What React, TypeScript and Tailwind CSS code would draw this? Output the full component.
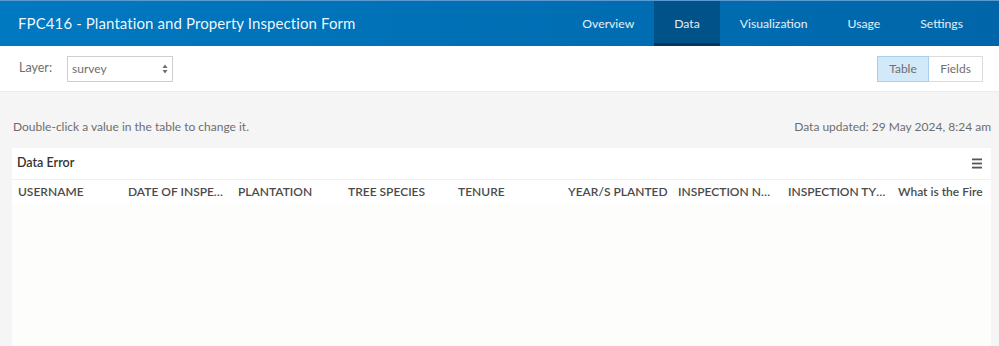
import React from "react";

const cols = [
  { t: "USERNAME", c: "w-[110px] shrink-0 pr-[8px] whitespace-nowrap overflow-hidden text-ellipsis" },
  { t: "DATE OF INSPECTION", c: "w-[110px] shrink-0 pr-[8px] whitespace-nowrap overflow-hidden text-ellipsis" },
  { t: "PLANTATION", c: "w-[110px] shrink-0 pr-[8px] whitespace-nowrap overflow-hidden text-ellipsis" },
  { t: "TREE SPECIES", c: "w-[110px] shrink-0 pr-[8px] whitespace-nowrap overflow-hidden text-ellipsis" },
  { t: "TENURE", c: "w-[110px] shrink-0 pr-[8px] whitespace-nowrap overflow-hidden text-ellipsis" },
  { t: "YEAR/S PLANTED", c: "w-[110px] shrink-0 pr-[4px] whitespace-nowrap overflow-hidden text-ellipsis" },
  { t: "INSPECTION NUMBER", c: "w-[110px] shrink-0 pr-[11px] whitespace-nowrap overflow-hidden text-ellipsis" },
  { t: "INSPECTION TYPE", c: "w-[110px] shrink-0 pr-[8px] whitespace-nowrap overflow-hidden text-ellipsis" },
  { t: "What is the Fire", c: "w-[110px] shrink-0 pr-[8px] whitespace-nowrap overflow-hidden" },
];

export default function App() {
  const font = { fontFamily: "Lato, 'Open Sans', sans-serif" };
  return (
    <div className="w-[999px] h-[346px] overflow-hidden bg-[#f5f5f5] flex flex-col" style={font}>
      <div className="h-[46px] shrink-0 flex items-stretch bg-gradient-to-r from-[#0079c1] to-[#0066a9] border-t border-[#5a9ad0]">
        <div className="flex-1 flex items-center pl-[18px] text-[15px] text-white/95 tracking-[0.1px]">
          FPC416 - Plantation and Property Inspection Form
        </div>
        <nav className="flex items-stretch text-[12.2px] text-white/90 pr-[16px]">
          <div className="px-[20px] flex items-center pt-[1px]">Overview</div>
          <div className="px-[20px] flex items-center bg-[#005289] border-b-[3px] border-[#00375c] pt-[4px]">Data</div>
          <div className="px-[20px] flex items-center pt-[1px]">Visualization</div>
          <div className="px-[20px] flex items-center pt-[1px]">Usage</div>
          <div className="px-[20px] flex items-center pt-[1px]">Settings</div>
        </nav>
      </div>
      <div className="h-[46px] shrink-0 bg-white border-b border-[#ececec] flex items-center px-[19px] pr-[16px]">
        <span className="text-[12.5px] text-[#6e6e6e]">Layer:</span>
        <div className="ml-[15px] w-[106px] h-[26px] border border-[#cfcfcf] flex items-center pl-[4px] pr-[4px] text-[12px] text-[#6e6e6e]">
          <span className="flex-1">survey</span>
          <svg width="6" height="10" viewBox="0 0 6 10">
            <path d="M3 0.5 L5.5 4 H0.5 Z" fill="#6e6e6e" />
            <path d="M3 9.5 L5.5 6 H0.5 Z" fill="#6e6e6e" />
          </svg>
        </div>
        <div className="flex-1" />
        <div className="flex h-[26px] text-[12px] text-[#6e6e6e]">
          <div className="w-[52px] flex items-center justify-center bg-[#d2e9f9] border border-[#a6d0ee]">Table</div>
          <div className="w-[54px] flex items-center justify-center border border-l-0 border-[#dcdcdc] bg-white">Fields</div>
        </div>
      </div>
      <div className="flex justify-between items-center px-[13px] pr-[8px] mt-[26px] text-[12px] text-[#6e6e6e]">
        <span>Double-click a value in the table to change it.</span>
        <span>Data updated: 29 May 2024, 8:24 am</span>
      </div>
      <div className="mx-[12px] mr-[8px] mt-[12px] flex-1 bg-[#fdfdfb] overflow-hidden">
        <div className="h-[32px] bg-white flex items-center pl-[5px] pr-[8px] border-b border-[#f0f0f0]">
          <span className="flex-1 text-[12.5px] font-semibold text-[#333]">Data Error</span>
          <svg width="11" height="11" viewBox="0 0 11 11">
            <rect x="0" y="0.5" width="10" height="1.8" fill="#555" />
            <rect x="0" y="4.6" width="10" height="1.8" fill="#555" />
            <rect x="0" y="8.7" width="10" height="1.8" fill="#555" />
          </svg>
        </div>
        <div className="h-[24px] bg-white flex items-center pl-[6px] text-[12px] font-semibold text-[#4a4a4a]">
          {cols.map((col, i) => (
            <div key={i} className={col.c}>
              {col.t}
            </div>
          ))}
        </div>
      </div>
    </div>
  );
}
